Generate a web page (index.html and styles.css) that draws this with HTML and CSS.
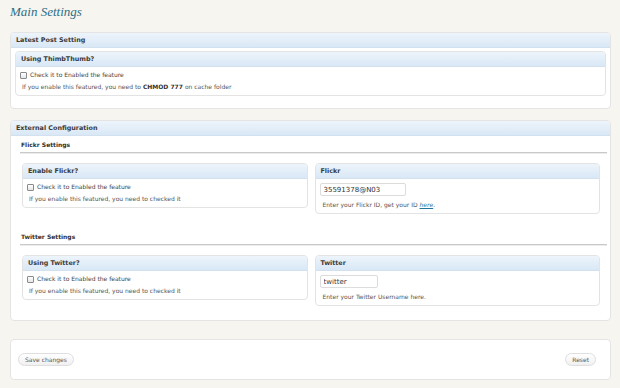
FILE: index.html
```html
<!DOCTYPE html>
<html lang="en">
<head>
    <meta charset="UTF-8">
    <meta name="viewport" content="width=device-width, initial-scale=1.0">
    <title>Main Settings</title>
    <link rel="stylesheet" href="styles.css">
</head>
<body>
    <div class="wrap">
        <h1 class="page-title">Main Settings</h1>

        <div class="panel panel-latest">
            <div class="panel-head">Latest Post Setting</div>
            <div class="panel-body">
                <div class="box">
                    <div class="box-head">Using ThimbThumb?</div>
                    <div class="box-body">
                        <label class="check"><input type="checkbox"> Check it to Enabled the feature</label>
                        <p class="help">If you enable this featured, you need to <b>CHMOD 777</b> on cache folder</p>
                    </div>
                </div>
            </div>
        </div>

        <div class="panel panel-external">
            <div class="panel-head">External Configuration</div>
            <div class="panel-body">
                <h3 class="sub">Flickr Settings</h3>
                <div class="cols">
                    <div class="box">
                        <div class="box-head">Enable Flickr?</div>
                        <div class="box-body">
                            <label class="check"><input type="checkbox"> Check it to Enabled the feature</label>
                            <p class="help">If you enable this featured, you need to checked it</p>
                        </div>
                    </div>
                    <div class="box">
                        <div class="box-head">Flickr</div>
                        <div class="box-body">
                            <input type="text" class="field field-flickr" value="35591378@N03">
                            <p class="help">Enter your Flickr ID, get your ID <a href="#">here</a>.</p>
                        </div>
                    </div>
                </div>

                <h3 class="sub sub-twitter">Twitter Settings</h3>
                <div class="cols">
                    <div class="box">
                        <div class="box-head">Using Twitter?</div>
                        <div class="box-body">
                            <label class="check"><input type="checkbox"> Check it to Enabled the feature</label>
                            <p class="help">If you enable this featured, you need to checked it</p>
                        </div>
                    </div>
                    <div class="box">
                        <div class="box-head">Twitter</div>
                        <div class="box-body">
                            <input type="text" class="field field-twitter" value="twitter">
                            <p class="help">Enter your Twitter Username here.</p>
                        </div>
                    </div>
                </div>
            </div>
        </div>

        <div class="panel panel-actions">
            <button class="btn">Save changes</button>
            <button class="btn">Reset</button>
        </div>
    </div>
</body>
</html>
```

FILE: styles.css
```css
body {
    margin: 0;
    background-color: #f6f5f0;
    font-family: "DejaVu Sans", Verdana, sans-serif;
    color: #444;
}

.wrap {
    padding: 0 9px 0 10px;
}

.page-title {
    margin: 0;
    height: 32px;
    padding-top: 4px;
    box-sizing: border-box;
    font-family: "Liberation Serif", Georgia, serif;
    font-style: italic;
    font-weight: normal;
    font-size: 13px;
    line-height: 16px;
    color: #2e6e85;
}

.panel {
    background: #ffffff;
    border: 1px solid #e4e4e4;
    border-radius: 4px;
    margin-bottom: 11px;
}

.panel-head,
.box-head {
    height: 14px;
    line-height: 14px;
    padding-left: 5px;
    font-size: 6.4px;
    font-weight: bold;
    color: #3a3a3a;
    background: linear-gradient(#edf4fb, #d9e8f6);
    border-bottom: 1px solid #d3e1ee;
    border-radius: 3px 3px 0 0;
}

.panel-latest .panel-body {
    padding: 3px 4px 12px 4px;
}

.box {
    background: #fff;
    border: 1px solid #e3e3e3;
    border-radius: 4px;
}

.box-body {
    padding: 3px 5px 3px 4px;
    font-size: 6px;
}

.check {
    display: flex;
    align-items: center;
    gap: 3px;
    height: 10px;
    line-height: 10px;
    color: #444;
}

.check input {
    appearance: none;
    margin: 0;
    width: 7px;
    height: 7px;
    border: 1px solid #8a8a8a;
    border-radius: 1px;
    background: linear-gradient(#ffffff, #e6e6e6);
    box-sizing: border-box;
}

.help {
    margin: 2px 0 0 2px;
    height: 10px;
    line-height: 10px;
    color: #555;
}

.help b {
    color: #333;
}

.help a {
    color: #21759b;
    font-style: italic;
}

.panel-external .panel-body {
    padding: 3px 3px 14px 9px;
}

.sub {
    margin: 0;
    padding: 1px 0 2px 1px;
    font-size: 6px;
    line-height: 10px;
    color: #333;
    border-bottom: 1px solid #c9c9c9;
    box-shadow: 0 1px 0 #ececec;
}

.sub-twitter {
    margin-top: 17px;
}

.cols {
    display: grid;
    grid-template-columns: 1fr 1fr;
    gap: 7px;
    align-items: start;
    margin: 10px 7px 0 2px;
}

.field {
    display: block;
    margin: 1px 0 4px 0;
    height: 13px;
    padding: 0 3px;
    box-sizing: border-box;
    border: 1px solid #dcdcdc;
    border-radius: 2px;
    font-family: "DejaVu Sans", Verdana, sans-serif;
    font-size: 7px;
    color: #333;
}

.field-flickr {
    width: 86px;
}

.field-twitter {
    width: 58px;
}

.cols .field + .help {
    margin: 0 0 0 3px;
}

.panel-actions {
    display: flex;
    justify-content: space-between;
    align-items: center;
    margin-top: 18px;
    padding: 13px 14px 13px 7px;
}

.btn {
    height: 13px;
    padding: 0 6px;
    border: 1px solid #dedede;
    border-radius: 7px;
    background: linear-gradient(#ffffff, #f0f0f0);
    font-family: "DejaVu Sans", Verdana, sans-serif;
    font-size: 6px;
    color: #555;
    cursor: pointer;
}
```
